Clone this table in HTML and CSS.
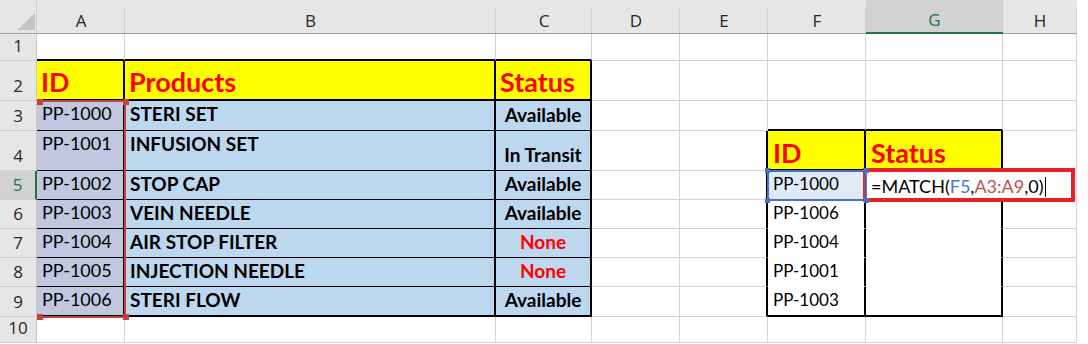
FILE: index.html
```html
<!DOCTYPE html>
<html lang="en">
<head>
  <meta charset="UTF-8">
  <title>Product Status - MATCH</title>
  <link rel="stylesheet" href="styles.css">
</head>
<body>
  <div class="frame">
    <div class="sheet">
      <!-- column headers -->
      <div class="corner"><svg width="37" height="33" viewBox="0 0 37 33"><polygon points="35,13 35,30 17,30" fill="#c4c4c4"/></svg></div>
      <div class="colhead">A</div>
      <div class="colhead">B</div>
      <div class="colhead">C</div>
      <div class="colhead">D</div>
      <div class="colhead">E</div>
      <div class="colhead">F</div>
      <div class="colhead on">G</div>
      <div class="colhead">H</div>

      <!-- row 1 -->
      <div class="rowhead">1</div>
      <div class="cell b2"></div>
      <div class="cell b2"></div>
      <div class="cell b2"></div>
      <div class="cell"></div>
      <div class="cell"></div>
      <div class="cell"></div>
      <div class="cell"></div>
      <div class="cell"></div>

      <!-- row 2 -->
      <div class="rowhead">2</div>
      <div class="cell title r2 b2">ID</div>
      <div class="cell title r2 b2">Products</div>
      <div class="cell title r2 b2">Status</div>
      <div class="cell"></div>
      <div class="cell"></div>
      <div class="cell"></div>
      <div class="cell"></div>
      <div class="cell"></div>

      <!-- row 3 -->
      <div class="rowhead">3</div>
      <div class="cell id r2 b1">PP-1000</div>
      <div class="cell product r2 b1">STERI SET</div>
      <div class="cell status r2 b1">Available</div>
      <div class="cell"></div>
      <div class="cell"></div>
      <div class="cell b2"></div>
      <div class="cell b2"></div>
      <div class="cell"></div>

      <!-- row 4 -->
      <div class="rowhead">4</div>
      <div class="cell id r2 b1">PP-1001</div>
      <div class="cell product r2 b1">INFUSION SET</div>
      <div class="cell status r2 b1">In Transit</div>
      <div class="cell"></div>
      <div class="cell r2"></div>
      <div class="cell title small r2 b2">ID</div>
      <div class="cell title small r2 b2">Status</div>
      <div class="cell"></div>

      <!-- row 5 -->
      <div class="rowhead on">5</div>
      <div class="cell id r2 b1">PP-1002</div>
      <div class="cell product r2 b1">STOP CAP</div>
      <div class="cell status r2 b1">Available</div>
      <div class="cell"></div>
      <div class="cell r2"></div>
      <div class="cell lookup picked r2 clear">PP-1000</div>
      <div class="cell lookup r2 clear"></div>
      <div class="cell"></div>

      <!-- row 6 -->
      <div class="rowhead">6</div>
      <div class="cell id r2 b1">PP-1003</div>
      <div class="cell product r2 b1">VEIN NEEDLE</div>
      <div class="cell status r2 b1">Available</div>
      <div class="cell"></div>
      <div class="cell r2"></div>
      <div class="cell lookup r2 clear">PP-1006</div>
      <div class="cell lookup r2 clear"></div>
      <div class="cell"></div>

      <!-- row 7 -->
      <div class="rowhead">7</div>
      <div class="cell id r2 b1">PP-1004</div>
      <div class="cell product r2 b1">AIR STOP FILTER</div>
      <div class="cell status none r2 b1">None</div>
      <div class="cell"></div>
      <div class="cell r2"></div>
      <div class="cell lookup r2 clear">PP-1004</div>
      <div class="cell lookup r2 clear"></div>
      <div class="cell"></div>

      <!-- row 8 -->
      <div class="rowhead">8</div>
      <div class="cell id r2 b1">PP-1005</div>
      <div class="cell product r2 b1">INJECTION NEEDLE</div>
      <div class="cell status none r2 b1">None</div>
      <div class="cell"></div>
      <div class="cell r2"></div>
      <div class="cell lookup r2 clear">PP-1001</div>
      <div class="cell lookup r2 clear"></div>
      <div class="cell"></div>

      <!-- row 9 -->
      <div class="rowhead">9</div>
      <div class="cell id r2 b2">PP-1006</div>
      <div class="cell product r2 b2">STERI FLOW</div>
      <div class="cell status r2 b2">Available</div>
      <div class="cell"></div>
      <div class="cell r2"></div>
      <div class="cell lookup r2 b2">PP-1003</div>
      <div class="cell lookup r2 b2"></div>
      <div class="cell"></div>

      <!-- row 10 -->
      <div class="rowhead">10</div>
      <div class="cell"></div>
      <div class="cell"></div>
      <div class="cell"></div>
      <div class="cell"></div>
      <div class="cell"></div>
      <div class="cell"></div>
      <div class="cell"></div>
      <div class="cell"></div>
    </div>

    <!-- formula reference boxes and the cell being edited -->
    <div class="marks">
      <div class="ref ref-red">
        <span class="grip tl"></span><span class="grip tr"></span>
        <span class="grip bl"></span><span class="grip br"></span>
      </div>
      <div class="ref ref-blue">
        <span class="grip tl"></span><span class="grip tr"></span>
        <span class="grip bl"></span><span class="grip br"></span>
      </div>
      <div class="editor">=MATCH(<span class="arg-blue">F5</span>,<span class="arg-red">A3:A9</span>,0)<span class="caret"></span></div>
    </div>
  </div>
</body>
</html>
```

FILE: styles.css
```css
body { margin: 0; background: #fff; font-family: Lato, "Liberation Sans", sans-serif; }

.frame { display: grid; width: 1077px; }

.sheet, .marks {
  grid-area: 1 / 1;
  display: grid;
  grid-template-columns: 37px 88px 371px 96px 88px 88px 98px 137px 74px;
  grid-template-rows: 34px 27px 40px 30px 40px 29px 29px 29px 29px 30px 26px;
}
.marks { pointer-events: none; }

/* headers */
.corner {
  background: #e6e6e6;
  border-right: 1px solid #cfcfcf;
  border-bottom: 1px solid #a0a0a0;
  box-sizing: border-box;
}
.corner svg { display: block; }

.colhead, .rowhead {
  box-sizing: border-box;
  display: flex;
  align-items: flex-end;
  justify-content: center;
  background-color: #e6e6e6;
  color: #262626;
  font: 17px/22px "Open Sans", sans-serif;
}
.colhead {
  background-image: linear-gradient(#cfcfcf, #cfcfcf);
  background-repeat: no-repeat;
  background-position: right bottom;
  background-size: 1px 25px;
  border-bottom: 1px solid #a0a0a0;
  padding-bottom: 1px;
}
.colhead.on { background-color: #d2d2d2; border-bottom: 2px solid #217346; color: #217346; }

.rowhead {
  border-right: 1px solid #c8c8c8;
  border-bottom: 1px solid #d0d0d0;
  padding-bottom: 3px;
}
.rowhead.on { background-color: #d2d2d2; border-right: 2px solid #217346; color: #217346; }

/* cells */
.cell {
  box-sizing: border-box;
  display: flex;
  align-items: flex-end;
  padding: 0 5px 4px;
  border-right: 1px solid #d4d4d4;
  border-bottom: 1px solid #d4d4d4;
  color: #000;
  font-size: 18px;
  line-height: 23px;
  white-space: nowrap;
}
.r2 { border-right: 2px solid #000; }
.b1 { border-bottom-color: #000; }
.b2 { border-bottom: 2px solid #000; }
.clear { border-bottom-color: transparent; }

.title {
  background-color: #ff0;
  color: #f00;
  font-weight: 700;
  font-size: 27px;
  line-height: 30px;
  padding: 0 4px 2px;
}
.title.small { padding-left: 5px; padding-bottom: 1px; }

.id { background-color: #bfc8de; align-items: flex-start; padding-top: 1px; }
.product { background-color: #bdd7ee; align-items: flex-start; padding-top: 1px; font-weight: 700; font-size: 19px; }
.status { background-color: #bdd7ee; justify-content: center; font-weight: 700; font-size: 19px; }
.status.none { color: #f00; }

.lookup { font-size: 17px; background-color: #fff; }
.lookup.picked { background-color: #e0e9f6; }

/* reference highlights */
.ref { position: relative; box-sizing: border-box; }
.ref-red {
  grid-column: 2;
  grid-row: 4 / 11;
  margin: -1px -1px -1px 0;
  border: 2px solid #c2413f;
  border-left: 0;
}
.ref-blue {
  grid-column: 7;
  grid-row: 6;
  margin: -1px -1px -1px -1px;
  border: 2px solid #4472c4;
}
.grip { position: absolute; width: 6px; height: 6px; }
.ref-red .grip { background: #c2413f; }
.ref-blue .grip { background: #4472c4; width: 5px; height: 5px; }
.ref-red .tl, .ref-red .bl { left: 0; }
.ref-red .tr, .ref-red .br { right: -5px; }
.ref-red .tl, .ref-red .tr { top: -3px; }
.ref-red .bl, .ref-red .br { bottom: -4px; }
.ref-blue .tl, .ref-blue .bl { left: -4px; }
.ref-blue .tr, .ref-blue .br { right: -4px; }
.ref-blue .tl, .ref-blue .tr { top: -4px; }
.ref-blue .bl, .ref-blue .br { bottom: -4px; }

/* cell in edit mode */
.editor {
  grid-column: 8 / 10;
  grid-row: 6;
  margin: -3px 2px -2px -3px;
  border: 4px solid #e62128;
  background: #fff;
  padding: 3px 4px 0;
  font-size: 18px;
  line-height: 23px;
  color: #000;
  white-space: nowrap;
}
.arg-blue { color: #3f79d6; }
.arg-red { color: #c0504d; }
.caret {
  display: inline-block;
  width: 1px;
  height: 20px;
  margin-left: 1px;
  background: #000;
  vertical-align: -4px;
}
```
